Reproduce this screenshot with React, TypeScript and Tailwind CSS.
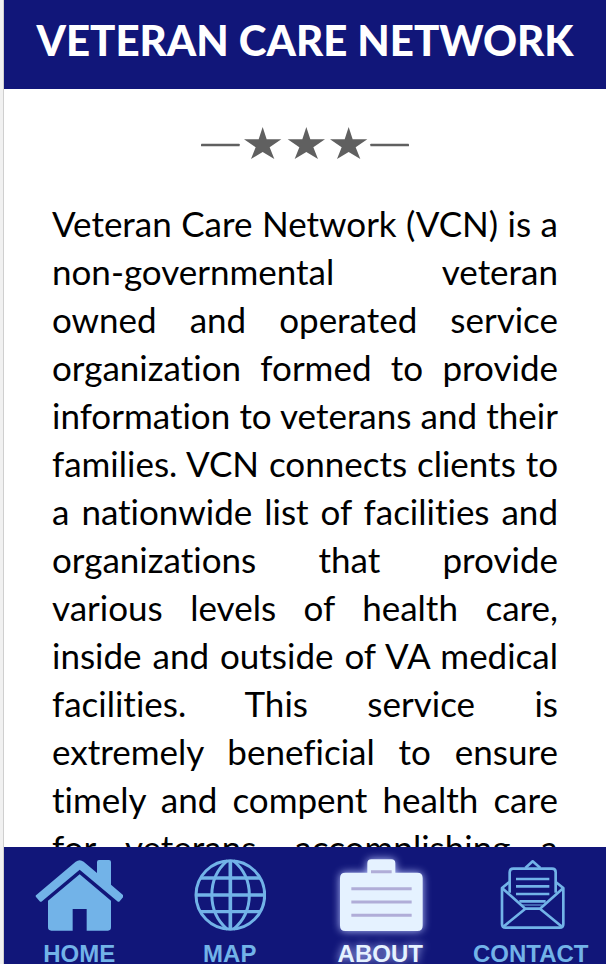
import type { ReactNode } from "react";

const starPoints = "0,-53 12,-16 56,-16 21,8 35,43 0,22 -35,43 -21,8 -56,-16 -12,-16";

function StarDivider() {
  return (
    <svg className="mx-auto mt-[38px] h-[34px] w-[208px]" viewBox="0 0 624 102" fill="#606060" role="img" aria-label="Three stars">
      <rect x="0" y="50" width="116" height="8" rx="2" />
      <rect x="508" y="50" width="116" height="8" rx="2" />
      <polygon points={starPoints} transform="translate(185 53)" />
      <polygon points={starPoints} transform="translate(316 53)" />
      <polygon points={starPoints} transform="translate(443 53)" />
    </svg>
  );
}

function HomeIcon() {
  return (
    <svg className="h-[72px] w-[88px]" viewBox="106 117 264 216" fill="#72b3e8" aria-hidden="true">
      <path d="M240 163 L334 242 V322 Q334 332 325 332 H261 V267 H219 V332 H155 Q145 332 145 322 V242 Z" />
      <path d="M109 226 L228 125 Q240 116 252 125 L292 159 V126 Q292 120 298 120 H328 Q334 120 334 126 V194 L371 226 Q373 229 370 232 L360 244 Q357 247 353 244 L240 149 L127 244 Q123 247 120 244 L109 231 Q107 228 109 226 Z" />
    </svg>
  );
}

function GlobeIcon() {
  return (
    <svg className="size-[72px]" viewBox="127 118 216 216" fill="none" stroke="#72b3e8" strokeWidth="9" aria-hidden="true">
      <circle cx="236" cy="226" r="103" />
      <path d="M236 122V330" strokeWidth="11" />
      <path d="M133 226H339M146 175H326M146 276H326" strokeWidth="10" />
      <path d="M227 123C165 176 165 276 227 329M245 123C309 176 309 276 245 329" />
    </svg>
  );
}

function AboutIcon() {
  return (
    <svg className="h-[72px] w-[84px] overflow-visible drop-shadow-[0_0_4px_#b9c4ff]" viewBox="106 118 252 216" aria-hidden="true">
      <path
        d="M194 159V131Q194 119 206 119H266Q278 119 278 131V159H344Q360 159 360 175V318Q360 334 344 334H128Q112 334 112 318V175Q112 159 128 159Z"
        fill="#e5f2ff"
      />
      <path d="M205 156H267M146 207H327M146 247H327M146 287H327" stroke="#b0add8" strokeWidth="9" />
    </svg>
  );
}

function ContactIcon() {
  return (
    <svg className="size-[72px]" viewBox="124 118 216 216" fill="none" stroke="#72b3e8" strokeWidth="8" strokeLinejoin="round" aria-hidden="true">
      <path d="M168 219V158Q168 147 179 147H295Q306 147 306 158V219" />
      <path d="M215 145L237 125L260 145M167 187L145 205V313Q145 324 156 324H318Q329 324 329 313V205L306 187" />
      <path d="M145 205L215 267H259L329 205M215 267L149 321M259 267L325 321" />
      <path d="M187 178H287M187 200H287M187 223H287M197 245H276" />
      <path d="M206 256H267" strokeWidth="3" />
    </svg>
  );
}

function NavItem({ href, label, active, children }: { href: string; label: string; active?: boolean; children: ReactNode }) {
  return (
    <a
      href={href}
      aria-current={active ? "page" : undefined}
      className={
        active
          ? "flex flex-col items-center gap-3 text-[#e5f2ff] [text-shadow:0_0_8px_#b9c4ff]"
          : "flex flex-col items-center gap-3 text-[#72b3e8]"
      }
    >
      {children}
      <span className="text-2xl leading-[21px] font-bold">{label}</span>
    </a>
  );
}

export default function App() {
  return (
    <div className="h-screen bg-[#f1f1f1] pl-[3px]">
      <div className="flex h-full flex-col border-l border-[#cfcfcf] bg-white">
        <header className="bg-[#111679] pt-4 pb-[25px] text-center font-['Lato',sans-serif] text-[42px] leading-[48px] font-black whitespace-nowrap text-white">
          <h1>VETERAN CARE NETWORK</h1>
        </header>
        <main className="min-h-0 flex-1 overflow-hidden">
          <StarDivider />
          <p className="mx-12 mt-[38px] text-justify font-['Lato',sans-serif] text-[35px] leading-[48px] font-normal text-black [font-variant-ligatures:none] [text-align-last:justify]">
            Veteran Care Network (VCN) is a non-governmental veteran owned and operated service organization formed to
            provide information to veterans and their families. VCN connects clients to a{"\u00a0"}nationwide list of
            facilities and organizations that provide various levels of health care, inside and outside of VA medical
            facilities. This service is extremely beneficial to ensure timely and compent health care for veterans,
            accomplishing a
          </p>
        </main>
        <nav className="grid grid-cols-4 bg-[#111679] pt-3 font-['Liberation_Sans',Arial,sans-serif]">
          <NavItem href="#home" label="HOME">
            <HomeIcon />
          </NavItem>
          <NavItem href="#map" label="MAP">
            <GlobeIcon />
          </NavItem>
          <NavItem href="#about" label="ABOUT" active>
            <AboutIcon />
          </NavItem>
          <NavItem href="#contact" label="CONTACT">
            <ContactIcon />
          </NavItem>
        </nav>
      </div>
    </div>
  );
}
